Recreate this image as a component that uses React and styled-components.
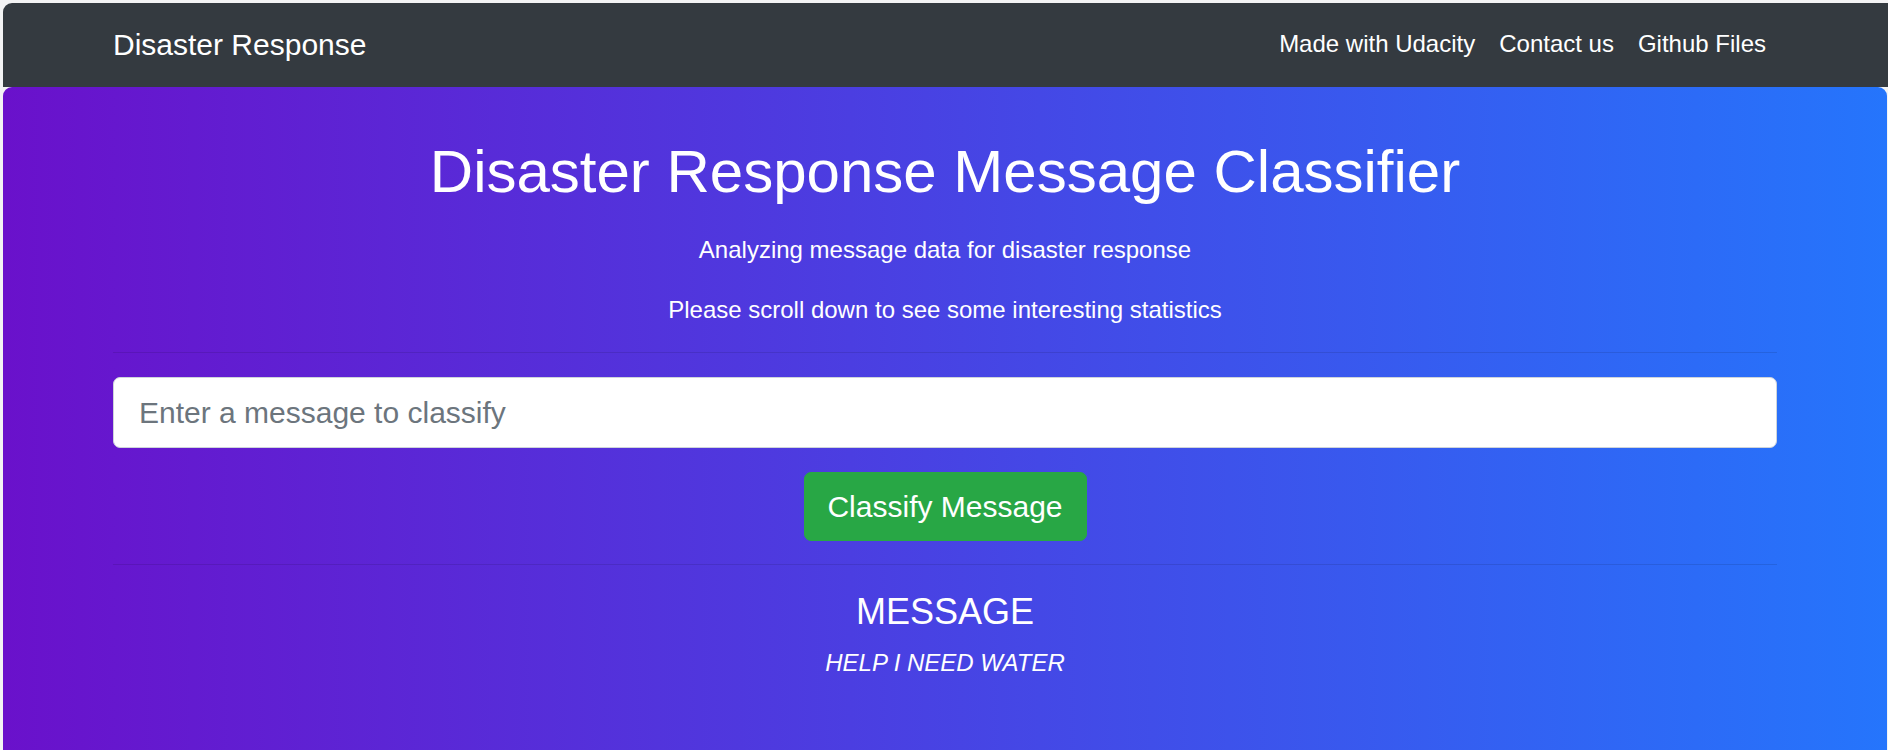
import React from "react";
import styled, { createGlobalStyle } from "styled-components";

const Global = createGlobalStyle`
  html, body { margin: 0; padding: 0; }
  body {
    background: #f3f3f4;
    font-family: "Liberation Sans", Arial, sans-serif;
    overflow: hidden;
  }
  #root { padding: 3px 0 0 3px; }
`;

const Page = styled.div`
  display: flex;
  flex-direction: column;
`;

const Navbar = styled.nav`
  background: #343a40;
  height: 84px;
  border-top-left-radius: 9px;
  display: flex;
  align-items: center;
  padding: 0 111px 0 110px;
  justify-content: space-between;
`;

const Brand = styled.a`
  color: #fff;
  font-size: 30px;
  line-height: 45px;
  text-decoration: none;
  margin-top: -1px;
`;

const NavLinks = styled.div`
  display: flex;
  gap: 24px;
  margin-right: 11px;
`;

const NavLink = styled.a`
  color: #fff;
  font-size: 24px;
  line-height: 36px;
  text-decoration: none;
  margin-top: -2px;
`;

const Jumbotron = styled.section`
  margin-top: 0;
  margin-right: 1px;
  height: 700px;
  border-radius: 9px 9px 0 0;
  background: linear-gradient(to right, #6a11cb 0%, #2575fc 100%);
  padding: 48px 110px 0;
  display: flex;
  flex-direction: column;
  align-items: stretch;
  color: #fff;
  text-align: center;
`;

const Title = styled.h1`
  margin: 1px 0 24px;
  font-size: 60px;
  font-weight: 400;
  line-height: 72px;
`;

const Lead = styled.p`
  margin: 0 0 24px;
  font-size: 24px;
  line-height: 36px;
`;

const Rule = styled.hr`
  margin: 0;
  border: 0;
  border-top: 1px solid rgba(0, 0, 0, 0.1);
  margin-bottom: ${(p) => p.$after}px;
`;

const Input = styled.input`
  box-sizing: border-box;
  width: 100%;
  height: 71px;
  border: 1px solid #ced4da;
  border-radius: 7px;
  padding: 0 25px;
  font-family: inherit;
  font-size: 30px;
  color: #495057;
  background: #fff;
  outline: none;
  &::placeholder { color: #6c757d; opacity: 1; }
`;

const ButtonRow = styled.div`
  display: flex;
  justify-content: center;
  margin: 24px 0 23px;
`;

const Button = styled.button`
  height: 69px;
  width: 283px;
  border: 1px solid #28a745;
  background: #28a745;
  color: #fff;
  border-radius: 7px;
  font-family: inherit;
  font-size: 30px;
  padding: 0;
`;

const MessageTitle = styled.h3`
  margin: 25px 0 12px;
  font-size: 36px;
  font-weight: 400;
  line-height: 43px;
`;

const MessageText = styled.p`
  margin: 0;
  font-size: 24px;
  line-height: 36px;
  font-style: italic;
`;

export default function App() {
  return (
    <>
      <Global />
      <Page>
        <Navbar>
          <Brand href="#">Disaster Response</Brand>
          <NavLinks>
            <NavLink href="#">Made with Udacity</NavLink>
            <NavLink href="#">Contact us</NavLink>
            <NavLink href="#">Github Files</NavLink>
          </NavLinks>
        </Navbar>
        <Jumbotron>
          <Title>Disaster Response Message Classifier</Title>
          <Lead>Analyzing message data for disaster response</Lead>
          <Lead>Please scroll down to see some interesting statistics</Lead>
          <Rule $after={24} />
          <Input placeholder="Enter a message to classify" />
          <ButtonRow>
            <Button>Classify Message</Button>
          </ButtonRow>
          <Rule $after={0} />
          <MessageTitle>MESSAGE</MessageTitle>
          <MessageText>HELP I NEED WATER</MessageText>
        </Jumbotron>
      </Page>
    </>
  );
}
